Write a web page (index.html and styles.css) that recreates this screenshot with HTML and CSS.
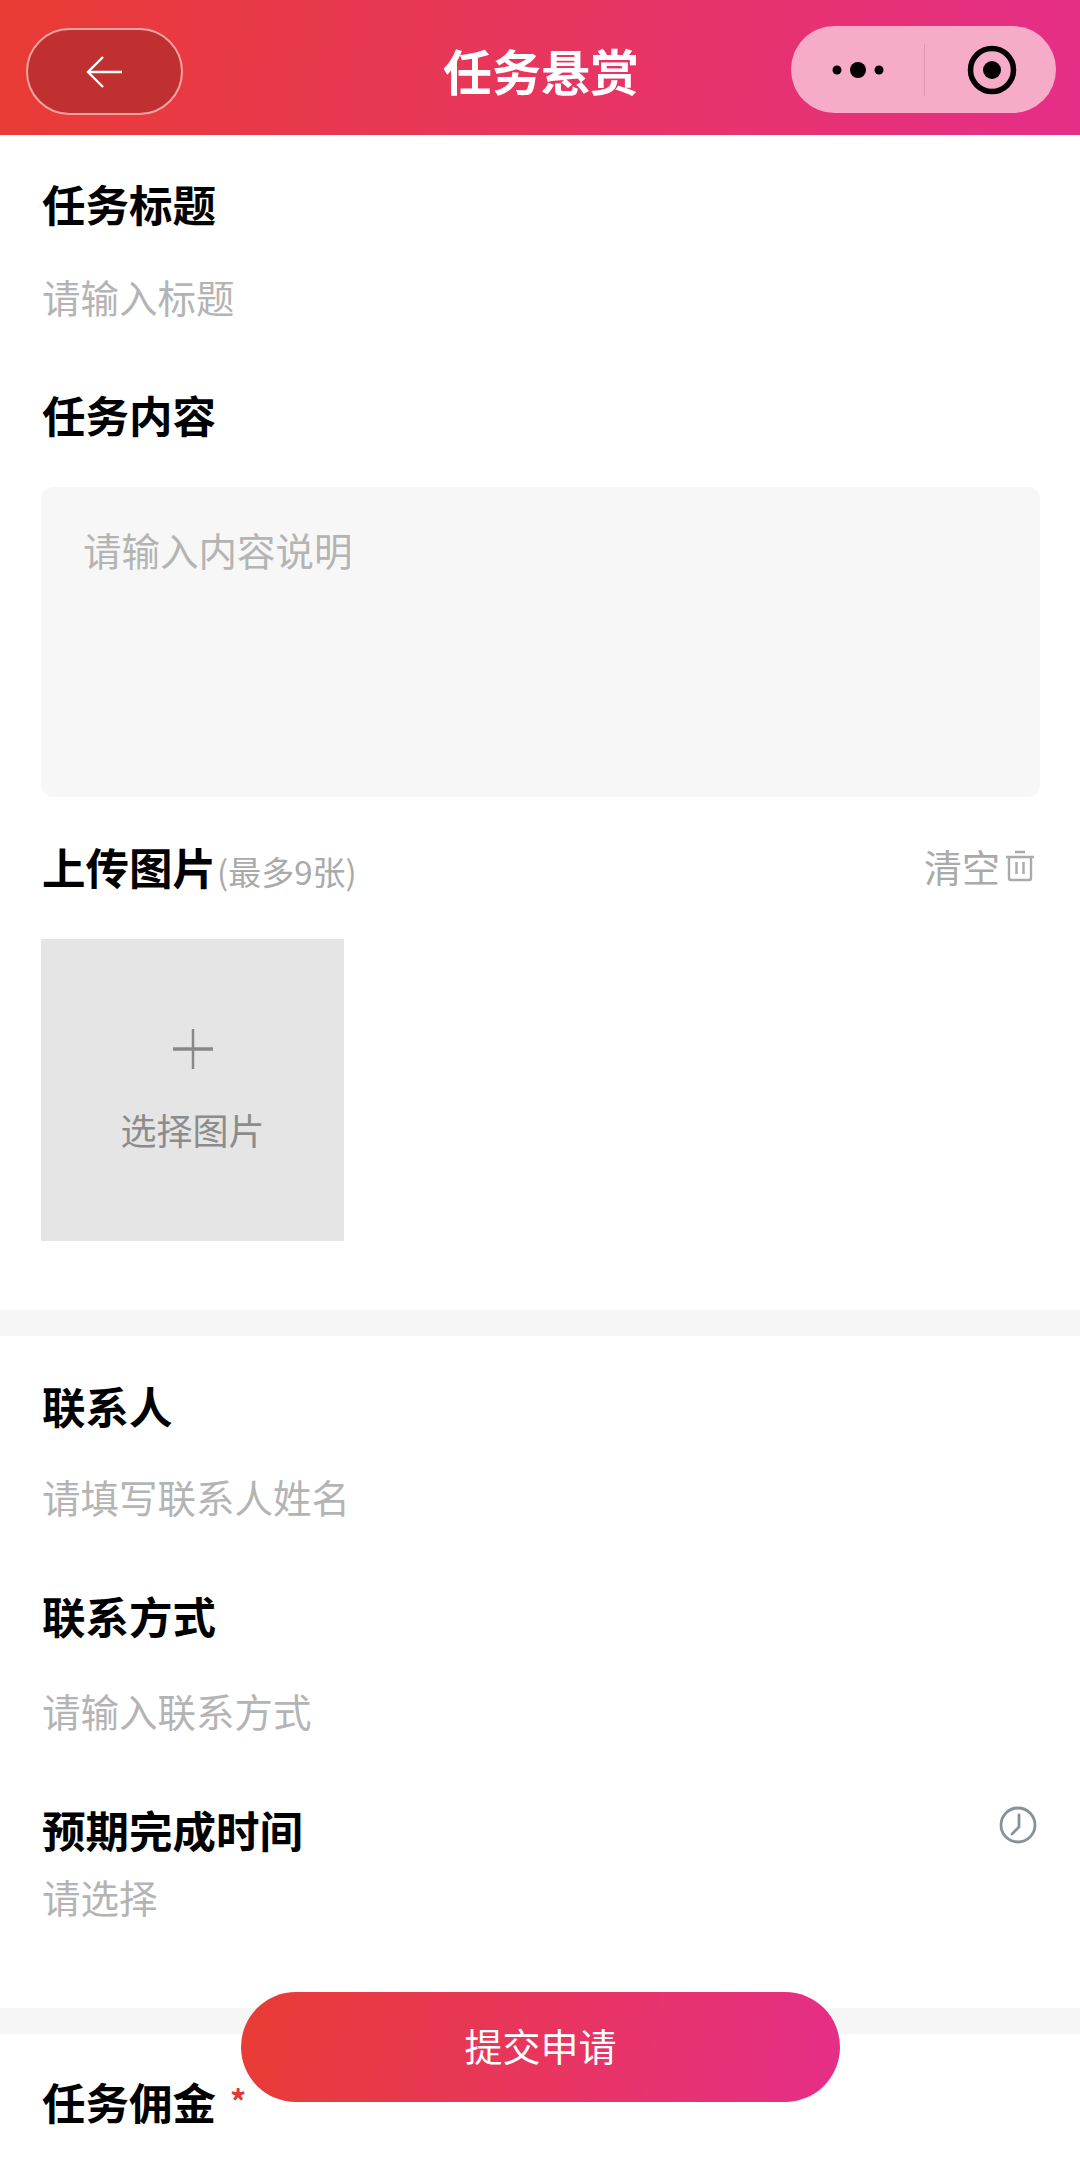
FILE: index.html
```html
<!DOCTYPE html>
<html lang="zh-CN">
<head>
    <meta charset="UTF-8">
    <meta name="viewport" content="width=device-width, initial-scale=1.0">
    <title>任务悬赏</title>
    <link rel="stylesheet" href="styles.css">
</head>
<body>
    <div class="page">
        <header class="topbar">
            <button class="back-btn" aria-label="返回">
                <svg width="38" height="34" viewBox="0 0 38 34" fill="none" stroke="#fff" stroke-width="2.4">
                    <path d="M17 2 2 17l15 15M2 17h34"/>
                </svg>
            </button>
            <h1 class="topbar-title">任务悬赏</h1>
            <div class="capsule">
                <div class="capsule-part capsule-part-left">
                    <svg width="54" height="18" viewBox="0 0 54 18" fill="#000">
                        <circle cx="6" cy="9" r="4.5"/>
                        <circle cx="27" cy="9" r="8"/>
                        <circle cx="48" cy="9" r="4.5"/>
                    </svg>
                </div>
                <div class="capsule-line"></div>
                <div class="capsule-part capsule-part-right">
                    <svg width="50" height="50" viewBox="0 0 50 50">
                        <circle cx="25" cy="25" r="21.5" fill="none" stroke="#000" stroke-width="5.5"/>
                        <circle cx="25" cy="25" r="9" fill="#000"/>
                    </svg>
                </div>
            </div>
        </header>

        <section class="block block-first">
            <div class="label">任务标题</div>
            <div class="hint hint-title">请输入标题</div>
            <div class="label label-content">任务内容</div>
            <div class="textarea"><span class="hint">请输入内容说明</span></div>
            <div class="upload-head">
                <div class="label">上传图片<span class="label-note">(最多9张)</span></div>
                <div class="clear">
                    清空
                    <svg width="30" height="32" viewBox="0 0 30 32" fill="none" stroke="#aaa" stroke-width="2.4">
                        <path d="M1 7h28M10 2h10M4 7v21a2 2 0 0 0 2 2h18a2 2 0 0 0 2-2V7M11.500 12v12M18.500 12v12"/>
                    </svg>
                </div>
            </div>
            <div class="upload-tile">
                <svg width="40" height="40" viewBox="0 0 40 40" stroke="#888">
                    <path d="M0 20h40" stroke-width="3.500"/>
                    <path d="M20 0v40" stroke-width="2.500"/>
                </svg>
                <span>选择图片</span>
            </div>
        </section>

        <div class="band"></div>

        <section class="block block-contact">
            <div class="label">联系人</div>
            <div class="hint hint-name">请填写联系人姓名</div>
            <div class="label label-way">联系方式</div>
            <div class="hint hint-way">请输入联系方式</div>
            <div class="time-row">
                <div class="label">预期完成时间</div>
                <svg class="clock" width="38" height="38" viewBox="0 0 38 38" fill="none" stroke="#84929a" stroke-width="2.800">
                    <circle cx="19" cy="19" r="17"/>
                    <path d="M20 9v12l-7 7" stroke-linecap="round"/>
                </svg>
            </div>
            <div class="hint hint-time">请选择</div>
        </section>

        <div class="band"></div>

        <section class="block block-reward">
            <div class="label">任务佣金<span class="star">*</span></div>
        </section>

        <button class="submit">提交申请</button>
    </div>
</body>
</html>
```

FILE: styles.css
```css
* {
    box-sizing: border-box;
}

body {
    margin: 0;
    background-color: #fff;
    font-family: "Noto Sans CJK SC", "Liberation Sans", sans-serif;
    color: #000;
}

.page {
    position: relative;
    height: 2163px;
    overflow: hidden;
}

.topbar {
    display: flex;
    align-items: center;
    justify-content: space-between;
    height: 135px;
    padding: 8px 24px 0 26px;
    background: linear-gradient(100deg, #e83c34 0%, #e8365a 45%, #e52e88 100%);
}

.topbar-title {
    margin: 0 0 4px 108px;
    font-size: 49px;
    font-weight: 700;
    color: #fff;
}

.back-btn {
    display: flex;
    align-items: center;
    justify-content: center;
    width: 157px;
    height: 87px;
    padding: 0;
    background-color: #c13031;
    border: 2px solid #f2a3a0;
    border-radius: 44px;
}

.capsule {
    display: flex;
    align-items: center;
    width: 265px;
    height: 87px;
    margin-bottom: 4px;
    background-color: #f6abc9;
    border-radius: 44px;
}

.capsule-part {
    display: flex;
    align-items: center;
    justify-content: center;
}

.capsule-part-left {
    width: 133px;
    padding-left: 2px;
}

.capsule-part-right {
    flex: 1;
    padding-left: 3px;
}

.capsule-line {
    width: 1px;
    height: 52px;
    background-color: #e596b5;
}

.block {
    padding-left: 42px;
    padding-right: 40px;
    background-color: #fff;
}

.block-first {
    padding-top: 36px;
    padding-bottom: 69px;
}

.block-contact {
    padding-top: 37px;
    padding-bottom: 86px;
}

.block-reward {
    padding-top: 35px;
}

.label {
    margin-bottom: -3px;
    padding-top: 3px;
    font-size: 43.500px;
    font-weight: 700;
    line-height: 60px;
    white-space: nowrap;
}

.label-note {
    margin-left: 1px;
    font-size: 33px;
    font-weight: 400;
    line-height: 1;
    color: #aaa;
}

.star {
    position: relative;
    top: -6px;
    margin-left: 14px;
    font-size: 32px;
    line-height: 1;
    color: #e03a35;
}

.hint {
    font-size: 38.500px;
    line-height: 52px;
    color: #b4b4b4;
}

.hint-title {
    margin-top: 39px;
}

.label-content {
    margin-top: 60px;
}

.textarea {
    height: 310px;
    margin: 45px 0 0 -1px;
    padding: 36px 42px;
    background-color: #f7f7f7;
    border-radius: 12px;
}

.upload-head {
    display: flex;
    align-items: center;
    justify-content: space-between;
    height: 60px;
    margin-top: 37px;
}

.clear {
    display: flex;
    align-items: center;
    gap: 5px;
    margin-right: 5px;
    padding-top: 3px;
    font-size: 38px;
    line-height: 52px;
    color: #aaa;
}

.upload-tile {
    display: flex;
    flex-direction: column;
    align-items: center;
    gap: 35px;
    width: 303px;
    height: 302px;
    margin: 45px 0 0 -1px;
    padding-top: 90px;
    background-color: #e5e5e5;
    font-size: 36px;
    line-height: 50px;
    color: #8c8c8c;
}

.band {
    height: 26px;
    background-color: #f6f6f6;
}

.hint-name {
    margin-top: 37px;
}

.label-way {
    margin-top: 61px;
}

.hint-way {
    margin-top: 41px;
}

.time-row {
    display: flex;
    align-items: flex-start;
    justify-content: space-between;
    margin-top: 61px;
}

.clock {
    margin: 9px 3px 0 0;
}

.hint-time {
    margin-top: 13px;
}

.submit {
    position: absolute;
    top: 1992px;
    left: 241px;
    width: 599px;
    height: 110px;
    padding: 0 0 6px;
    border: none;
    border-radius: 55px;
    background: linear-gradient(100deg, #e83c34 0%, #e8365a 45%, #e52e88 100%);
    font-family: inherit;
    font-size: 38px;
    color: #fff;
}
```
